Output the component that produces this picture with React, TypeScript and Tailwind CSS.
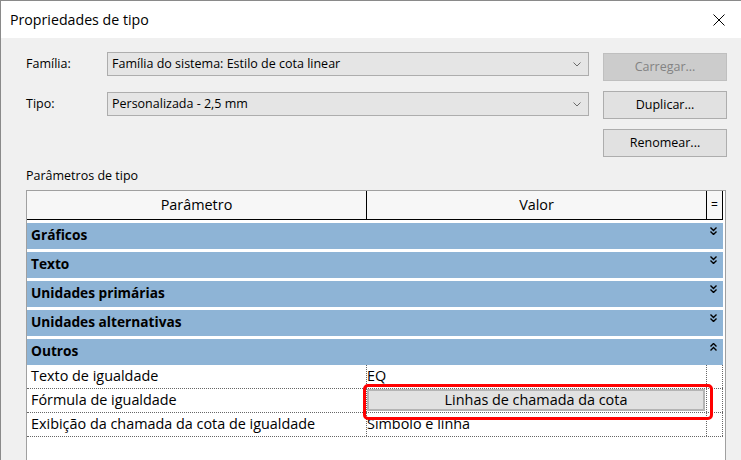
import React from "react";

const GROUPS: { name: string; open?: boolean }[] = [
  { name: "Gráficos" },
  { name: "Texto" },
  { name: "Unidades primárias" },
  { name: "Unidades alternativas" },
  { name: "Outros", open: true },
];

function Chevron() {
  return (
    <svg width="8" height="5" viewBox="0 0 8 5" className="shrink-0">
      <polyline points="0.5,0.5 4,4 7.5,0.5" fill="none" stroke="#6b6b6b" strokeWidth="1" />
    </svg>
  );
}

function DoubleChevron({ up }: { up?: boolean }) {
  return (
    <svg width="7" height="8" viewBox="0 0 7 8" className={up ? "rotate-180" : ""}>
      <polyline points="0.5,0.5 3.5,3.5 6.5,0.5" fill="none" stroke="#000" strokeWidth="1.4" />
      <polyline points="0.5,4.5 3.5,7.5 6.5,4.5" fill="none" stroke="#000" strokeWidth="1.4" />
    </svg>
  );
}

function Select({ value }: { value: string }) {
  return (
    <div className="flex h-[24px] w-[482px] items-center justify-between border border-[#adadad] bg-[#e5e5e5] pl-[4px] pr-[7px] text-[12.5px]">
      <span>{value}</span>
      <Chevron />
    </div>
  );
}

function Btn({ label, disabled }: { label: string; disabled?: boolean }) {
  return (
    <div
      className={`flex h-[28px] w-[124px] items-center justify-center border text-[12.5px] ${
        disabled ? "border-[#bfbfbf] bg-[#cccccc] text-[#838383]" : "border-[#adadad] bg-[#e1e1e1] text-black"
      }`}
    >
      {label}
    </div>
  );
}

function DataRow({ name, children }: { name: string; children: React.ReactNode }) {
  return (
    <div className="grid h-[24px] grid-cols-[340px_340px_16px] border-b border-dotted border-[#666] text-[14.4px]">
      <div className="flex items-center border-r border-dotted border-[#666] pl-[4px]">{name}</div>
      <div className="flex items-center border-r border-dotted border-[#666]">{children}</div>
      <div className="border-r border-dotted border-[#666]" />
    </div>
  );
}

export default function App() {
  return (
    <div className="relative flex h-[460px] w-[741px] flex-col overflow-hidden border-l border-t border-[#8a8a8a] bg-[#f0f0f0] font-['Open_Sans',sans-serif] text-black">
      <div className="flex h-[37px] shrink-0 items-center justify-between bg-white pl-[9px] pr-[16px]">
        <span className="text-[14.2px]">Propriedades de tipo</span>
        <svg width="12" height="12" viewBox="0 0 12 12">
          <path d="M0.5 0.5 L11.5 11.5 M11.5 0.5 L0.5 11.5" stroke="#000" strokeWidth="1" />
        </svg>
      </div>

      <div className="flex pl-[25px] pt-[14px]">
        <div className="flex w-[563px] flex-col gap-[16px]">
          <div className="flex items-center">
            <span className="w-[81px] text-[12.5px]">Família:</span>
            <Select value="Família do sistema: Estilo de cota linear" />
          </div>
          <div className="flex items-center">
            <span className="w-[81px] text-[12.5px]">Tipo:</span>
            <Select value="Personalizada - 2,5 mm" />
          </div>
        </div>
        <div className="ml-[14px] flex flex-col gap-[10px] pt-[1px]">
          <Btn label="Carregar..." disabled />
          <Btn label="Duplicar..." />
          <Btn label="Renomear..." />
        </div>
      </div>

      <div className="mt-[10px] pl-[25px] text-[12.5px]">Parâmetros de tipo</div>

      <div className="ml-[25px] mt-[4px] w-[700px] flex-1 border-l border-r border-t border-[#a0a0a0] bg-white">
        <div className="grid h-[29px] w-[696px] grid-cols-[340px_340px_16px] border-b border-black bg-[#f7f7f7] text-[14.4px]">
          <div className="flex items-center justify-center border-r border-black">Parâmetro</div>
          <div className="flex items-center justify-center border-r border-black">Valor</div>
          <div className="flex items-center justify-center border-r border-black text-[12px]">=</div>
        </div>
        <div className="w-[696px]">
          {GROUPS.map((g) => (
            <div key={g.name} className="mt-[3px] flex h-[26px] items-center justify-between bg-[#8eb4d6] pl-[4px] pr-[6px]">
              <span className="text-[13.7px] font-bold">{g.name}</span>
              <div className="self-start pt-[4px]">
                <DoubleChevron up={g.open} />
              </div>
            </div>
          ))}
          <DataRow name="Texto de igualdade">
            <span>EQ</span>
          </DataRow>
          <DataRow name="Fórmula de igualdade">
            <div className="flex h-[22px] w-[338px] items-center justify-center border-2 border-[#b4b4b4] bg-[#e1e1e1]">
              Linhas de chamada da cota
            </div>
          </DataRow>
          <DataRow name="Exibição da chamada da cota de igualdade">
            <span>Símbolo e linha</span>
          </DataRow>
        </div>
      </div>

      <div className="absolute left-[362px] top-[383px] h-[36px] w-[350px] rounded-[5px] border-[3px] border-[#ff0000]" />
    </div>
  );
}
